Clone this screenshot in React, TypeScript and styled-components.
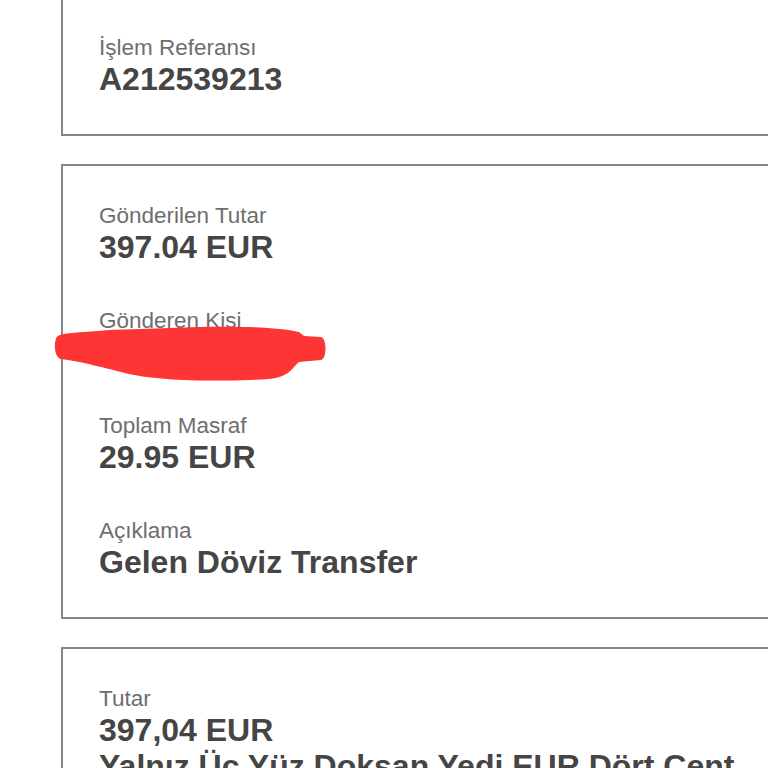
import React from "react";
import styled, { createGlobalStyle } from "styled-components";

const GlobalStyle = createGlobalStyle`
  html, body {
    margin: 0;
    padding: 0;
    background: #ffffff;
    overflow: hidden;
  }
  body {
    font-family: "Liberation Sans", Arial, "Helvetica Neue", sans-serif;
  }
`;

const Page = styled.div`
  display: flex;
  flex-direction: column;
  gap: 28px;
  padding-left: 61px;
  margin-top: -4px;
  width: 760px;
`;

const Card = styled.section`
  box-sizing: border-box;
  width: 760px;
  border: 2px solid #868686;
  background: #ffffff;
  padding: 37px 36px 37px 36px;
  display: flex;
  flex-direction: column;
  gap: 43px;
`;

const Field = styled.div`
  position: relative;
  display: flex;
  flex-direction: column;
`;

const Label = styled.div`
  font-size: 22.5px;
  line-height: 26px;
  color: #6e6e6e;
  font-weight: 400;
  white-space: nowrap;
`;

const Value = styled.div`
  font-size: 32px;
  line-height: 36px;
  color: #454545;
  font-weight: 700;
  white-space: nowrap;
`;

const Redacted = styled.div`
  height: 36px;
`;

const Scribble = styled.svg`
  position: absolute;
  left: -46px;
  top: 16px;
  width: 280px;
  height: 60px;
  pointer-events: none;
`;

function Redaction() {
  return (
    <Scribble viewBox="0 0 280 60" aria-hidden="true">
      <path
        d="M 3 15
           C 3 8, 26 9, 56 6
           L 146 3
           C 186 2, 226 3, 246 8
           L 251 12
           L 268 13
           C 274 14, 274 35, 268 36
           L 246 38
           C 238 45, 236 53, 216 55
           C 166 58, 106 57, 76 50
           C 56 45, 26 37, 8 35
           C 1 33, 1 19, 3 15 Z"
        fill="#fd3534"
      />
    </Scribble>
  );
}

type Item = { label: string; value?: string; extra?: string; redacted?: boolean };

const cards: Item[][] = [
  [{ label: "İşlem Referansı", value: "A212539213" }],
  [
    { label: "Gönderilen Tutar", value: "397.04 EUR" },
    { label: "Gönderen Kişi", redacted: true },
    { label: "Toplam Masraf", value: "29.95 EUR" },
    { label: "Açıklama", value: "Gelen Döviz Transfer" },
  ],
  [
    {
      label: "Tutar",
      value: "397,04 EUR",
      extra: "Yalnız Üç Yüz Doksan Yedi EUR Dört Cent",
    },
  ],
];

export default function App() {
  return (
    <>
      <GlobalStyle />
      <Page>
        {cards.map((items, i) => (
          <Card key={i}>
            {items.map((it) => (
              <Field key={it.label}>
                <Label>{it.label}</Label>
                {it.redacted ? <Redacted /> : <Value>{it.value}</Value>}
                {it.extra && <Value>{it.extra}</Value>}
                {it.redacted && <Redaction />}
              </Field>
            ))}
          </Card>
        ))}
      </Page>
    </>
  );
}
